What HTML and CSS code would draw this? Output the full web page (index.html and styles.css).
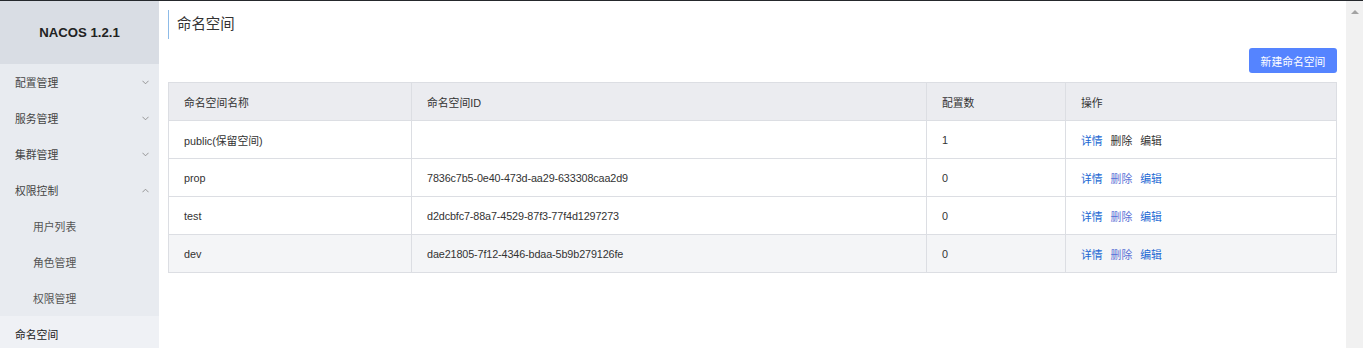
FILE: index.html
```html
<!DOCTYPE html>
<html lang="zh-CN">
<head>
<meta charset="utf-8">
<title>Nacos</title>
<link rel="stylesheet" href="styles.css">
</head>
<body>
<div class="topline"></div>
<div class="layout">
  <aside class="sidebar">
    <div class="brand">NACOS 1.2.1</div>
    <ul class="menu">
      <li class="item"><span>配置管理</span><svg class="chev" viewBox="0 0 8 5"><path d="M0.5 0.5 L4 4 L7.5 0.5" /></svg></li>
      <li class="item"><span>服务管理</span><svg class="chev" viewBox="0 0 8 5"><path d="M0.5 0.5 L4 4 L7.5 0.5" /></svg></li>
      <li class="item"><span>集群管理</span><svg class="chev" viewBox="0 0 8 5"><path d="M0.5 0.5 L4 4 L7.5 0.5" /></svg></li>
      <li class="item"><span>权限控制</span><svg class="chev" viewBox="0 0 8 5"><path d="M0.5 4.5 L4 1 L7.5 4.5" /></svg></li>
      <li class="item sub"><span>用户列表</span></li>
      <li class="item sub"><span>角色管理</span></li>
      <li class="item sub"><span>权限管理</span></li>
      <li class="item active"><span>命名空间</span></li>
    </ul>
  </aside>
  <main class="main">
    <div class="title">命名空间</div>
    <div class="actions"><button class="btn">新建命名空间</button></div>
    <table class="grid">
      <colgroup>
        <col class="c1"><col class="c2"><col class="c3"><col class="c4">
      </colgroup>
      <thead>
        <tr><th>命名空间名称</th><th>命名空间ID</th><th>配置数</th><th>操作</th></tr>
      </thead>
      <tbody>
        <tr>
          <td>public(保留空间)</td><td></td><td>1</td>
          <td><span class="lk">详情</span><span class="op dark">删除</span><span class="op dark">编辑</span></td>
        </tr>
        <tr>
          <td>prop</td><td class="id">7836c7b5-0e40-473d-aa29-633308caa2d9</td><td>0</td>
          <td><span class="lk">详情</span><span class="op del">删除</span><span class="op">编辑</span></td>
        </tr>
        <tr>
          <td>test</td><td class="id">d2dcbfc7-88a7-4529-87f3-77f4d1297273</td><td>0</td>
          <td><span class="lk">详情</span><span class="op del">删除</span><span class="op">编辑</span></td>
        </tr>
        <tr class="hover">
          <td>dev</td><td class="id">dae21805-7f12-4346-bdaa-5b9b279126fe</td><td>0</td>
          <td><span class="lk">详情</span><span class="op del">删除</span><span class="op">编辑</span></td>
        </tr>
      </tbody>
    </table>
  </main>
  <div class="scrollbar"><div class="arrow"></div></div>
</div>
</body>
</html>
```
FILE: styles.css
```css
* { box-sizing: border-box; }
html, body { margin: 0; padding: 0; }
body {
  width: 1363px;
  height: 348px;
  overflow: hidden;
  background: #fff;
  color: #333;
  font-family: "Liberation Sans", Arial, "Noto Sans CJK SC", sans-serif;
  font-size: 10.8px;
}
.topline { height: 1px; background: #25282c; }
.layout { display: flex; height: 347px; }
.sidebar { width: 159px; flex: none; background: #e8ebf0; }
.brand {
  height: 63px;
  background: #d9dde4;
  display: flex;
  align-items: center;
  justify-content: center;
  font-weight: bold;
  font-size: 13.2px;
  color: #222;
}
.menu { list-style: none; margin: 0; padding: 0; }
.item {
  height: 36px;
  display: flex;
  align-items: center;
  justify-content: space-between;
  padding: 0 10px 0 15px;
  color: #444;
}
.item.sub { padding-left: 33px; color: #555; }
.item.active { background: #eff1f5; color: #222; }
.chev { width: 7px; height: 5px; fill: none; stroke: #8a8a8a; stroke-width: 1; }
.main { flex: 1; padding: 9px 9px 0 9px; background: #fff; }
.title {
  height: 29px;
  line-height: 29px;
  border-left: 1px solid #8dbbe8;
  padding-left: 8px;
  font-size: 14.4px;
  color: #333;
}
.actions { display: flex; justify-content: flex-end; margin-top: 9px; }
.btn {
  height: 25px;
  width: 88px;
  border: none;
  border-radius: 3px;
  background: #5584ff;
  color: #fff;
  font: inherit;
  font-size: 10.8px;
  padding: 0;
}
.grid {
  margin-top: 9px;
  width: 100%;
  border-collapse: collapse;
  table-layout: fixed;
  border: 1px solid #dcdee3;
}
.c1 { width: 243px; }
.c2 { width: 515px; }
.c3 { width: 139px; }
.grid th, .grid td {
  height: 38px;
  padding: 0 15px;
  text-align: left;
  font-weight: normal;
  border: 1px solid #dcdee3;
  color: #333;
}
.grid td.id { letter-spacing: -0.12px; }
.grid th { background: #ebecf0; }
.grid tr.hover td { background: #f4f5f7; }
.lk { color: #2168d3; }
.op { margin-left: 8px; color: #2168d3; }
.op.del { color: #5a72d6; }
.op.dark { color: #333; }
.scrollbar { width: 17px; flex: none; background: #f1f1f1; padding-top: 9px; display: flex; justify-content: center; align-items: flex-start; }
.arrow {
  width: 0; height: 0;
  border-left: 4px solid transparent;
  border-right: 4px solid transparent;
  border-bottom: 4px solid #a3a3a3;
}
```
